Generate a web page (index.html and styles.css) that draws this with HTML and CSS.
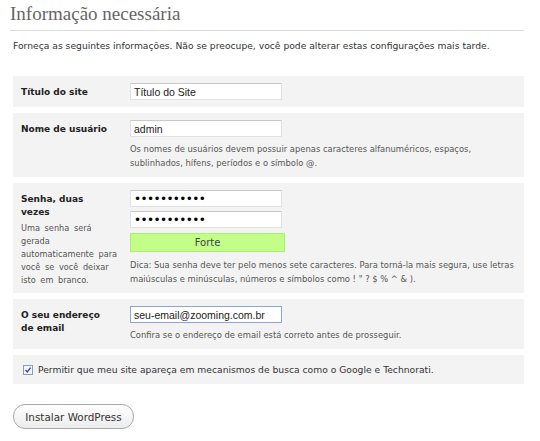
FILE: index.html
```html
<!DOCTYPE html>
<html>
<head>
<meta charset="utf-8">
<link rel="stylesheet" href="styles.css">
</head>

<body>
<div class="page">
  <h1 class="title">Informação necessária</h1>
  <p class="intro">Forneça as seguintes informações. Não se preocupe, você pode alterar estas configurações mais tarde.</p>

  <div class="form-table">
    <div class="row">
      <div class="label">Título do site</div>
      <div class="field">
        <input class="text" type="text" value="Título do Site">
      </div>
    </div>

    <div class="row">
      <div class="label">Nome de usuário</div>
      <div class="field">
        <input class="text" type="text" value="admin">
        <p class="hint">Os nomes de usuários devem possuir apenas caracteres alfanuméricos, espaços, sublinhados, hífens, períodos e o símbolo @.</p>
      </div>
    </div>

    <div class="row">
      <div class="label">
        Senha, duas vezes
        <p class="label-note">Uma senha será gerada automaticamente para você se você deixar isto em branco.</p>
      </div>
      <div class="field">
        <input class="text" type="password" value="abcdefghijk">
        <input class="text" type="password" value="abcdefghijk">
        <div class="strength">Forte</div>
        <p class="hint">Dica: Sua senha deve ter pelo menos sete caracteres. Para torná-la mais segura, use letras maiúsculas e minúsculas, números e símbolos como ! " ? $ % ^ &amp; ).</p>
      </div>
    </div>

    <div class="row">
      <div class="label">O seu endereço de email</div>
      <div class="field">
        <input class="text focused" type="text" value="seu-email@zooming.com.br">
        <p class="hint">Confira se o endereço de email está correto antes de prosseguir.</p>
      </div>
    </div>

    <div class="row row-check">
      <label class="check">
        <svg class="checkbox" width="10" height="10" viewBox="0 0 10 10">
          <rect x="0.5" y="0.5" width="9" height="9" fill="#f4f6fa" stroke="#8a9bb8"/>
          <path d="M2.5 5 L4.3 7 L7.6 2.6" fill="none" stroke="#33509a" stroke-width="1.4"/>
        </svg>
        Permitir que meu site apareça em mecanismos de busca como o Google e Technorati.
      </label>
    </div>
  </div>

  <div class="actions">
    <button class="install">Instalar WordPress</button>
  </div>
</div>
</body>
</html>
```

FILE: styles.css
```css
html, body
{
  margin: 0;
  padding: 0;
  background: #fff;
}

body
{
  font-family: "DejaVu Sans", Verdana, sans-serif;
  font-size: 9.2px;
  color: #333;
}

.page
{
  padding: 0 16px 0 13px;
}

.title
{
  margin: 0 0 0 -3px;
  padding: 3px 0 5px 0;
  font-family: "Liberation Serif", Georgia, serif;
  font-size: 19px;
  font-weight: normal;
  line-height: 22px;
  color: #666;
  border-bottom: 1px solid #dadada;
}

.intro
{
  margin: 8px 0 0 0;
  line-height: 13px;
}

.form-table
{
  display: flex;
  flex-direction: column;
  gap: 6px;
  margin-top: 24px;
}

.row
{
  display: grid;
  grid-template-columns: 117px 1fr;
  background: #f3f3f3;
}

.label
{
  padding: 10px 20px 0 8px;
  font-size: 9px;
  font-weight: bold;
  line-height: 13px;
  color: #222;
}

/* the note gets a little more room than the bold label */
.label-note
{
  margin: 3px -11px 0 0;
  font-size: 8.2px;
  font-weight: normal;
  word-spacing: 2px;
  color: #555;
}

.field
{
  display: flex;
  flex-direction: column;
  align-items: flex-start;
  padding: 7px 0 7px 0;
}

.text
{
  box-sizing: border-box;
  width: 152px;
  height: 17px;
  margin: 0;
  padding: 0 3px;
  font-family: "Liberation Sans", Arial, sans-serif;
  font-size: 10.5px;
  color: #222;
  background: #fff;
  border: 1px solid #e2e2e2;
  border-top-color: #c9c9c9;
  outline: none;
}

.text + .text
{
  margin-top: 4px;
}

.text[type="password"]
{
  font-family: "DejaVu Sans", Verdana, sans-serif;
  font-size: 12px;
  letter-spacing: -0.6px;
  color: #000;
}

.focused
{
  border-color: #8aa6d4;
}

.strength
{
  box-sizing: border-box;
  width: 155px;
  height: 19px;
  margin-top: 5px;
  line-height: 17px;
  font-size: 10px;
  text-align: center;
  color: #444;
  background: #c3ff88;
  border: 1px solid #a6f26a;
}

.hint
{
  max-width: 390px;
  margin: 5px 0 0 0;
  font-size: 8.4px;
  line-height: 14px;
  color: #555;
}

.strength + .hint
{
  margin-top: 6px;
}

.row-check
{
  display: block;
  padding: 8px 10px;
}

.check
{
  display: flex;
  align-items: center;
  gap: 5px;
  line-height: 13px;
  color: #333;
}

.checkbox
{
  flex: none;
}

.actions
{
  display: flex;
  margin-top: 20px;
}

.install
{
  box-sizing: border-box;
  width: 121px;
  height: 25px;
  padding: 0;
  font-family: "DejaVu Sans", Verdana, sans-serif;
  font-size: 10.4px;
  color: #333;
  background: linear-gradient(#ffffff, #ececec);
  border: 1px solid #a9a9a9;
  border-radius: 12px;
}
```
